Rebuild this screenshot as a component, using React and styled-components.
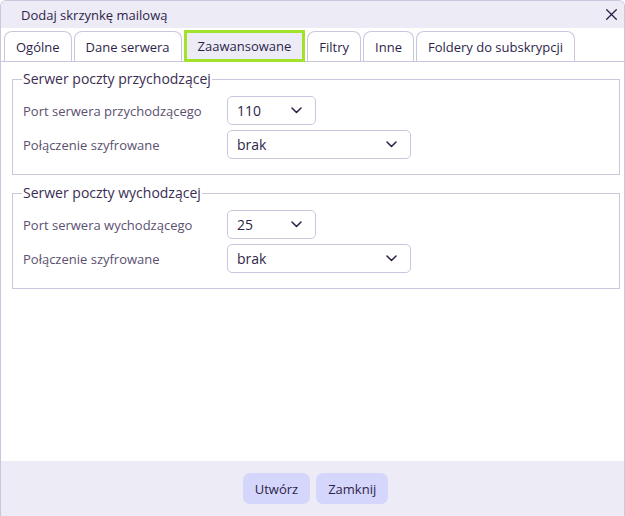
import React from "react";
import styled, { createGlobalStyle } from "styled-components";

const Global = createGlobalStyle`
  html, body { margin: 0; padding: 0; background: #ffffff; }
  body { font-family: "Open Sans", "Noto Sans", sans-serif; color: #2e1f4a; }
  * { box-sizing: border-box; }
`;

const Dialog = styled.div`
  width: 625px;
  height: 516px;
  display: flex;
  flex-direction: column;
  border: 1px solid #c9c7de;
  border-bottom: none;
  border-radius: 6px 6px 0 0;
  overflow: hidden;
  background: #ffffff;
`;

const Header = styled.div`
  height: 27px;
  flex: none;
  background: #ecebf6;
  display: flex;
  align-items: center;
  justify-content: space-between;
  padding: 0 6px 0 20px;
`;

const Title = styled.div`
  font-size: 13px;
  color: #2e1f4a;
`;

const CloseButton = styled.button`
  border: none;
  background: transparent;
  padding: 0;
  width: 14px;
  height: 14px;
  display: flex;
  align-items: center;
  justify-content: center;
  color: #2e1f4a;
  cursor: pointer;
`;

const TabBar = styled.div`
  height: 34px;
  flex: none;
  display: flex;
  align-items: flex-end;
  gap: 2px;
  padding-left: 3px;
  border-bottom: 1px solid #c9c7de;
`;

const Tab = styled.div`
  height: ${(p) => (p.$active ? "32px" : "30px")};
  margin-bottom: ${(p) => (p.$active ? "-1px" : "0")};
  padding: 0 11px;
  display: flex;
  align-items: center;
  font-size: 13px;
  color: #2e1f4a;
  background: ${(p) => (p.$active ? "#ecebf6" : "#ffffff")};
  border: ${(p) => (p.$active ? "3px solid #a2e22a" : "1px solid #c9c7de")};
  border-bottom: ${(p) => (p.$active ? "3px solid #a2e22a" : "none")};
  border-radius: ${(p) => (p.$active ? "0" : "8px 8px 0 0")};
`;

const Content = styled.div`
  flex: 1;
  padding: 9px 4px 0 11px;
  display: flex;
  flex-direction: column;
  gap: 10px;
`;

const Fieldset = styled.fieldset`
  margin: 0;
  padding: 9px 10px 15px 10px;
  border: 1px solid #c9c7de;
  display: grid;
  grid-template-columns: 204px auto;
  row-gap: 5px;
  align-items: center;
  justify-items: start;
`;

const Legend = styled.legend`
  padding: 0 1px;
  margin-left: -1px;
  font-size: 14px;
  line-height: 16px;
  color: #3a2d52;
`;

const Label = styled.label`
  font-size: 13px;
  color: #5b5070;
`;

const Select = styled.div`
  width: ${(p) => p.$width}px;
  height: 29px;
  border: 1px solid #c9c7de;
  border-radius: 5px;
  display: flex;
  align-items: center;
  justify-content: space-between;
  padding: 0 13px 0 9px;
  font-size: 14px;
  color: #2e1f4a;
`;

const Footer = styled.div`
  height: 55px;
  flex: none;
  background: #ecebf6;
  display: flex;
  align-items: center;
  justify-content: center;
  gap: 6px;
  padding-left: 6px;
`;

const Button = styled.button`
  height: 31px;
  padding: 0 12px;
  border: none;
  border-radius: 7px;
  background: #d5d6fb;
  font-family: inherit;
  font-size: 13px;
  color: #2e1f4a;
  cursor: pointer;
`;

const Chevron = () => (
  <svg width="11" height="7" viewBox="0 0 11 7" fill="none">
    <path d="M1 1l4.5 4.5L10 1" stroke="#2e1f4a" strokeWidth="1.5" strokeLinecap="round" strokeLinejoin="round" />
  </svg>
);

const SelectBox = ({ value, width }) => (
  <Select $width={width}>
    <span>{value}</span>
    <Chevron />
  </Select>
);

const tabs = ["Ogólne", "Dane serwera", "Zaawansowane", "Filtry", "Inne", "Foldery do subskrypcji"];

const groups = [
  { legend: "Serwer poczty przychodzącej", port: "Port serwera przychodzącego", portValue: "110" },
  { legend: "Serwer poczty wychodzącej", port: "Port serwera wychodzącego", portValue: "25" },
];

export default function App() {
  return (
    <>
      <Global />
      <Dialog>
        <Header>
          <Title>Dodaj skrzynkę mailową</Title>
          <CloseButton aria-label="Zamknij">
            <svg width="11" height="11" viewBox="0 0 11 11">
              <path d="M0.7 0.7l9.6 9.6M10.3 0.7L0.7 10.3" stroke="#2e1f4a" strokeWidth="1.3" strokeLinecap="round" />
            </svg>
          </CloseButton>
        </Header>
        <TabBar>
          {tabs.map((t) => (
            <Tab key={t} $active={t === "Zaawansowane"}>{t}</Tab>
          ))}
        </TabBar>
        <Content>
          {groups.map((g) => (
            <Fieldset key={g.legend}>
              <Legend>{g.legend}</Legend>
              <Label>{g.port}</Label>
              <SelectBox value={g.portValue} width={89} />
              <Label>Połączenie szyfrowane</Label>
              <SelectBox value="brak" width={184} />
            </Fieldset>
          ))}
        </Content>
        <Footer>
          <Button>Utwórz</Button>
          <Button>Zamknij</Button>
        </Footer>
      </Dialog>
    </>
  );
}
